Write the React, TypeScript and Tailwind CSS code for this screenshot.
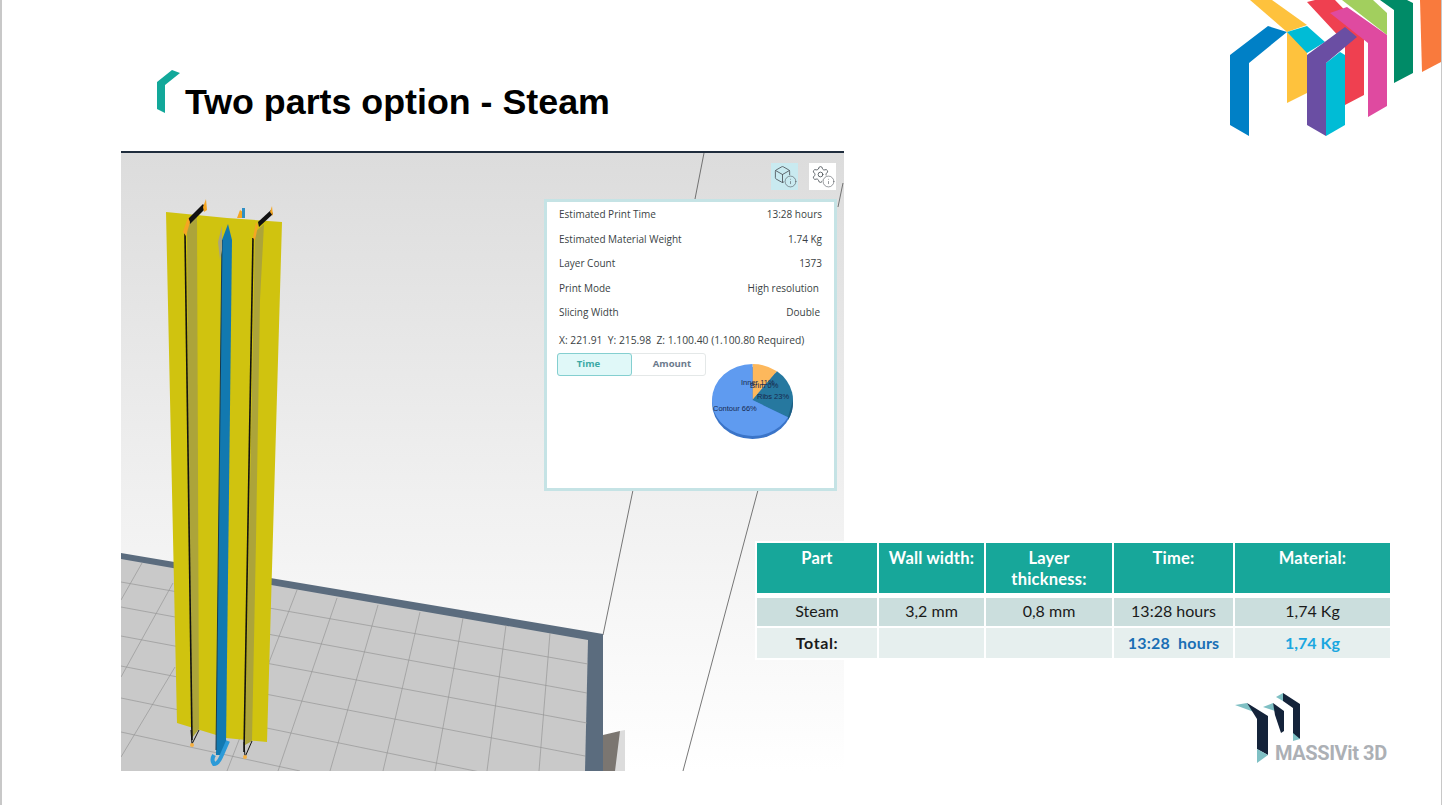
import React from "react";
import { Box, Info, Settings } from "lucide-react";

const stats = [
  { label: "Estimated Print Time", value: "13:28 hours", pad: "" },
  { label: "Estimated Material Weight", value: "1.74 Kg", pad: "" },
  { label: "Layer Count", value: "1373", pad: "" },
  { label: "Print Mode", value: "High resolution", pad: "pr-[3px]" },
  { label: "Slicing Width", value: "Double", pad: "pr-[2px]" },
];

const floorRows = [
  [121, 582, 588, 664],
  [121, 607, 587, 693],
  [121, 636, 587, 723],
  [121, 666, 585, 756],
  [121, 698, 480, 772],
  [121, 732, 300, 771],
];

const floorCols = [
  [142, 563, 121, 600],
  [173, 583, 121, 677],
  [175, 667, 121, 757],
  [297, 590, 227, 771],
  [337, 598, 278, 771],
  [378, 605, 330, 771],
  [420, 612, 383, 771],
  [463, 618, 435, 771],
  [506, 625, 487, 771],
  [550, 633, 539, 771],
];

function Scene() {
  return (
    <svg viewBox="121 153 723 618" className="block h-[618px] w-[723px]">
      <defs>
        <linearGradient id="sky" x1="0" y1="0" x2="0" y2="1">
          <stop offset="0" stopColor="#dcdcdc" />
          <stop offset="0.55" stopColor="#f0f0f0" />
          <stop offset="1" stopColor="#ffffff" />
        </linearGradient>
      </defs>
      <rect x="121" y="153" width="723" height="618" fill="url(#sky)" />

      <g stroke="#555" strokeWidth="0.8">
        <line x1="704" y1="153" x2="695" y2="199" />
        <line x1="843" y1="183" x2="838" y2="207" />
        <line x1="633" y1="490" x2="603" y2="635" />
        <line x1="758" y1="490" x2="683" y2="771" />
      </g>

      {/* build plate */}
      <polygon points="121,553 603,634 603,771 121,771" fill="#5b6c7e" />
      <polygon points="121,559 588,640 585,771 121,771" fill="#c9c9c9" />
      <g stroke="#979797" strokeWidth="0.7">
        {floorRows.map(([a, b, c, d]) => (
          <line key={`${a}-${b}`} x1={a} y1={b} x2={c} y2={d} />
        ))}
        {floorCols.map(([a, b, c, d]) => (
          <line key={`${a}-${b}`} x1={a} y1={b} x2={c} y2={d} />
        ))}
      </g>
      <polygon points="603,735 620,731 620,771 603,771" fill="#7b7671" />
      <polygon points="620,731 625,730 625,771 615,771" fill="#dcdcdc" />

      {/* stem model */}
      <polygon points="166,212 227,218 282,222 267,742 226,738 177,723" fill="#d0c30f" />
      <polygon points="187,222 197,216 199,729 192,738 189,540" fill="#aca43a" />
      <polygon points="255,232 264,224 260,300 256,540 252,741 245,745" fill="#aca43a" />
      <polygon points="222,240 228,224 232,240 226,745 222,755 216,755" fill="#1279b0" />
      <line x1="222" y1="240" x2="216" y2="750" stroke="#16394f" strokeWidth="1" />
      <polygon points="218,242 222,226 222,250 220,260" fill="#a9a57e" />
      <line x1="185" y1="233" x2="192" y2="740" stroke="#111" strokeWidth="1.6" />
      <line x1="253" y1="238" x2="244" y2="752" stroke="#111" strokeWidth="1.6" />
      <polygon points="188,219 203,204 206,208 190,224" fill="#111" />
      <polygon points="258,222 271,210 273,214 259,227" fill="#111" />
      <polygon points="183,232 188,217 190,222 186,236" fill="#f5a623" />
      <polygon points="203,207 206,199 207,210 204,212" fill="#f5a623" />
      <polygon points="253,238 256,222 258,226 255,240" fill="#f5a623" />
      <polygon points="270,212 272,206 273,216" fill="#f5a623" />
      <polygon points="237,218 240,210 243,212 242,218" fill="#f5a623" />
      <polygon points="242,208 245,208 245,218 242,218" fill="#2f8fc4" />
      <path d="M228 741 L221 757 Q218 764 214 764 Q211 760 214 755" fill="none" stroke="#2b9ad8" strokeWidth="4" />
      <path d="M191 730 L192 744 L199 730 M244 742 L245 757 L252 741" fill="none" stroke="#111" strokeWidth="1" />
      <circle cx="192" cy="745" r="2" fill="#f5b042" />
      <circle cx="245" cy="757" r="2" fill="#f5b042" />
    </svg>
  );
}

function PieChart() {
  return (
    <svg viewBox="706 360 94 85" className="h-[85px] w-[94px] shrink-0">
      <ellipse cx="752.5" cy="403" rx="40.5" ry="36" fill="#3a74c8" />
      <path d="M752.5 400 L752.5 364 A40.5 36 0 0 1 777 371.3 Z" fill="#fdb85c" />
      <path d="M752.5 400 L777 371.3 A40.5 36 0 0 1 788 417.3 Z" fill="#26789f" />
      <path d="M788 417.3 L788 420 A40.5 36 0 0 0 793 403 L793 400 Z" fill="#1c5f80" />
      <path d="M752.5 400 L788 417.3 A40.5 36 0 0 1 712 400 A40.5 36 0 0 1 752.5 364 Z" fill="#5f9bf0" />
      <g fontFamily="'Liberation Sans', sans-serif" fontSize="7.5" fill="#18294d">
        <text x="741" y="385">Inner 11%</text>
        <text x="750" y="388">Brim 0%</text>
        <text x="757" y="399">Ribs 23%</text>
        <text x="713" y="411">Contour 66%</text>
      </g>
    </svg>
  );
}

function InfoPanel() {
  return (
    <div className="absolute left-[423px] top-[46px] h-[292px] w-[293px] border-[3px] border-[#c5e3e5] bg-white px-3 pt-[0.5px] font-['Open_Sans',sans-serif] text-[10px] text-[#3a3f44]">
      {stats.map((s) => (
        <div key={s.label} className="flex h-[24.5px] items-center justify-between">
          <span>{s.label}</span>
          <span className={s.pad}>{s.value}</span>
        </div>
      ))}
      <div className="mt-[3px] flex h-[24.5px] items-center text-[10.3px]">X: 221.91&nbsp; Y: 215.98&nbsp; Z: 1.100.40 (1.100.80 Required)</div>
      <div className="-ml-[2px] flex items-start">
        <div className="flex h-[23px] w-[149px] shrink-0 rounded-[3px] border border-[#e4e8e8] text-[9.5px] font-bold">
          <div className="-m-px flex h-[23px] w-[75px] items-center justify-center rounded-[3px] border border-[#84cfd0] bg-[#e0f8f8] pr-[12px] text-[#3ba9a5]">Time</div>
          <div className="flex flex-1 items-center justify-center pl-[8px] text-[#6b7a8c]">Amount</div>
        </div>
        <div className="mt-[7px]">
          <PieChart />
        </div>
      </div>
    </div>
  );
}

function ViewIcons() {
  return (
    <div className="absolute left-[650px] top-[10px] flex gap-[11px] text-[#4f555b]">
      <div className="relative h-[27px] w-[27px] bg-[#c9eaf0]">
        <Box size={19} strokeWidth={1.1} className="ml-[2px] mt-[2px]" />
        <Info size={13} strokeWidth={1.1} className="absolute bottom-[2px] right-[1px] rounded-full bg-[#c9eaf0]" />
      </div>
      <div className="relative h-[27px] w-[27px] bg-white">
        <Settings size={19} strokeWidth={1.1} className="ml-[2px] mt-[2px]" />
        <Info size={13} strokeWidth={1.1} className="absolute bottom-[2px] right-[1px] rounded-full bg-white" />
      </div>
    </div>
  );
}

const cols = "grid grid-cols-[120px_105px_126px_119px_155px] gap-x-[2px]";

function ResultsTable() {
  return (
    <div className="absolute left-[636px] top-[390px] w-[633px] bg-white font-['Lato',sans-serif] text-[16px] text-[#1a1a1a] ring-2 ring-white">
      <div className={`${cols} h-[50px] text-center text-[16.5px] font-bold leading-[21px] tracking-[0.2px] text-white`}>
        <div className="bg-[#17a79a] pt-[5px]">Part</div>
        <div className="bg-[#17a79a] pt-[5px]">Wall width:</div>
        <div className="bg-[#17a79a] pt-[5px]">
          Layer
          <br />
          thickness:
        </div>
        <div className="bg-[#17a79a] pt-[5px]">Time:</div>
        <div className="bg-[#17a79a] pt-[5px]">Material:</div>
      </div>
      <div className={`${cols} mt-[5px] h-[28px] text-center leading-[26px]`}>
        <div className="bg-[#cbdedd]">Steam</div>
        <div className="bg-[#cbdedd]">3,2 mm</div>
        <div className="bg-[#cbdedd]">0,8 mm</div>
        <div className="bg-[#cbdedd]">13:28 hours</div>
        <div className="bg-[#cbdedd]">1,74 Kg</div>
      </div>
      <div className={`${cols} mt-[2px] h-[30px] text-center font-bold leading-[30px]`}>
        <div className="bg-[#e6efee] tracking-[0.6px]">Total:</div>
        <div className="bg-[#e6efee]" />
        <div className="bg-[#e6efee]" />
        <div className="bg-[#e6efee] tracking-[0.2px] text-[#1a6fb5]">13:28&nbsp; hours</div>
        <div className="bg-[#e6efee] text-[#1aa7e0]">1,74 Kg</div>
      </div>
    </div>
  );
}

function BrandMark() {
  return (
    <svg viewBox="1230 0 211 137" className="absolute right-0 top-0 h-[137px] w-[211px]">
      <polygon points="1250,0 1272,0 1307,25 1287,32" fill="#fec23d" />
      <polygon points="1287,32 1307,50 1307,93 1287,103" fill="#fec23d" />
      <polygon points="1230,55 1268,26 1287,32 1249,63 1249,136 1230,125" fill="#0080c6" />
      <polygon points="1287,32 1307,26 1325,42 1307,53" fill="#00bcd6" />
      <polygon points="1307,2 1315,0 1335,0 1364,30 1364,95 1345,105 1345,43" fill="#ef4050" />
      <polygon points="1342,0 1373,0 1387,13 1387,35" fill="#a2cf5e" />
      <polygon points="1380,0 1407,0 1413,3 1413,73 1394,83 1394,10" fill="#008b67" />
      <polygon points="1420,0 1441,0 1441,62 1422,72" fill="#f97a3d" />
      <polygon points="1330,13 1347,7 1387,35 1387,106 1368,117 1368,43" fill="#df4aa0" />
      <polygon points="1326,63 1340,52 1345,55 1345,125 1326,136" fill="#00bcd6" />
      <polygon points="1307,55 1345,27 1357,37 1326,63 1326,136 1307,125" fill="#6a4ea3" />
    </svg>
  );
}

function MassivitLogo() {
  return (
    <svg viewBox="1235 693 156 72" className="absolute left-[1233px] top-[693px] h-[72px] w-[156px]">
      <polygon points="1235,705 1247,703 1254,712" fill="#7fc0c4" />
      <polygon points="1247,703 1268,716 1268,755 1257,749 1257,719" fill="#14233a" />
      <polygon points="1257,749 1268,755 1257,763" fill="#7fc0c4" />
      <polygon points="1263,707 1273,703 1275,711" fill="#7fc0c4" />
      <polygon points="1273,703 1284,711 1284,731 1281,733 1275,715" fill="#14233a" />
      <polygon points="1276,697 1283,693 1283,701" fill="#7fc0c4" />
      <polygon points="1283,693 1300,704 1300,739 1293,735 1293,708 1283,701" fill="#14233a" />
      <polygon points="1293,733 1300,739 1293,741" fill="#7fc0c4" />
      <text x="1275" y="760" fontFamily="Roboto, sans-serif" fontWeight="700" fontSize="20" letterSpacing="-0.4" fill="#acb0b5">MASSIVit 3D</text>
    </svg>
  );
}

export default function App() {
  return (
    <div className="relative h-[805px] w-[1442px] overflow-hidden border-l-2 border-r border-[#c8c8c8] bg-white">
      <BrandMark />
      <header className="flex h-[151px] items-start gap-[5px] pl-[155px] pt-[70px]">
        <svg viewBox="157 70 23 43" className="h-[43px] w-[23px] shrink-0">
          <polygon points="157,82 172,70 180,73 165,85 165,113 157,109" fill="#12a89a" />
        </svg>
        <h1 className="mt-[12px] font-['Liberation_Sans',sans-serif] text-[35.8px] font-bold leading-[40px] text-black">Two parts option - Steam</h1>
      </header>
      <main className="relative ml-[119px] h-[620px] w-[723px] border-t-2 border-[#1f2d3d]">
        <Scene />
        <ViewIcons />
        <InfoPanel />
        <ResultsTable />
      </main>
      <MassivitLogo />
    </div>
  );
}
